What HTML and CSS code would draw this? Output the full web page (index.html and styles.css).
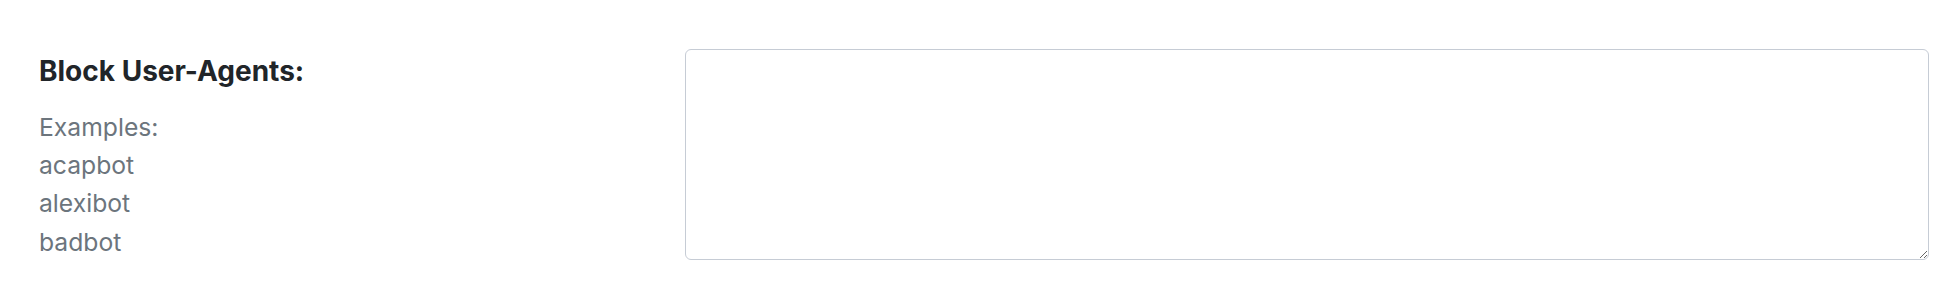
FILE: index.html
```html
<!DOCTYPE html>
<html lang="en">
<head>
  <meta charset="UTF-8" />
  <title>Block User-Agents</title>
  <link rel="stylesheet" href="styles.css">
</head>
<body>
  <div class="settings-row">
    <div class="setting-label">
      <label class="label-title" for="blockAgents">Block User-Agents:</label>
      <div class="label-help">
        Examples:<br>
        acapbot<br>
        alexibot<br>
        badbot
      </div>
    </div>
    <div class="setting-field">
      <textarea id="blockAgents" class="form-control"></textarea>
    </div>
  </div>
</body>
</html>
```

FILE: styles.css
```css
body {
  font-family: Inter, "Noto Sans", sans-serif;
  margin: 0;
  background: white;
  color: #212529;
}
.settings-row {
  display: flex;
  padding: 49px 29px 0 39px;
}
.setting-label {
  width: 646px;
  flex-shrink: 0;
}
.label-title {
  display: block;
  font-size: 28px;
  font-weight: 700;
  line-height: 32px;
  margin-top: 6px;
}
.label-help {
  margin-top: 21px;
  font-size: 24.7px;
  line-height: 38.2px;
  color: #6c757d;
}
.setting-field {
  flex: 1;
}
.form-control {
  display: block;
  box-sizing: border-box;
  width: 100%;
  height: 211px;
  margin: 0;
  border: 1px solid #c6ccd5;
  border-radius: 6px;
  background: white;
}
```
